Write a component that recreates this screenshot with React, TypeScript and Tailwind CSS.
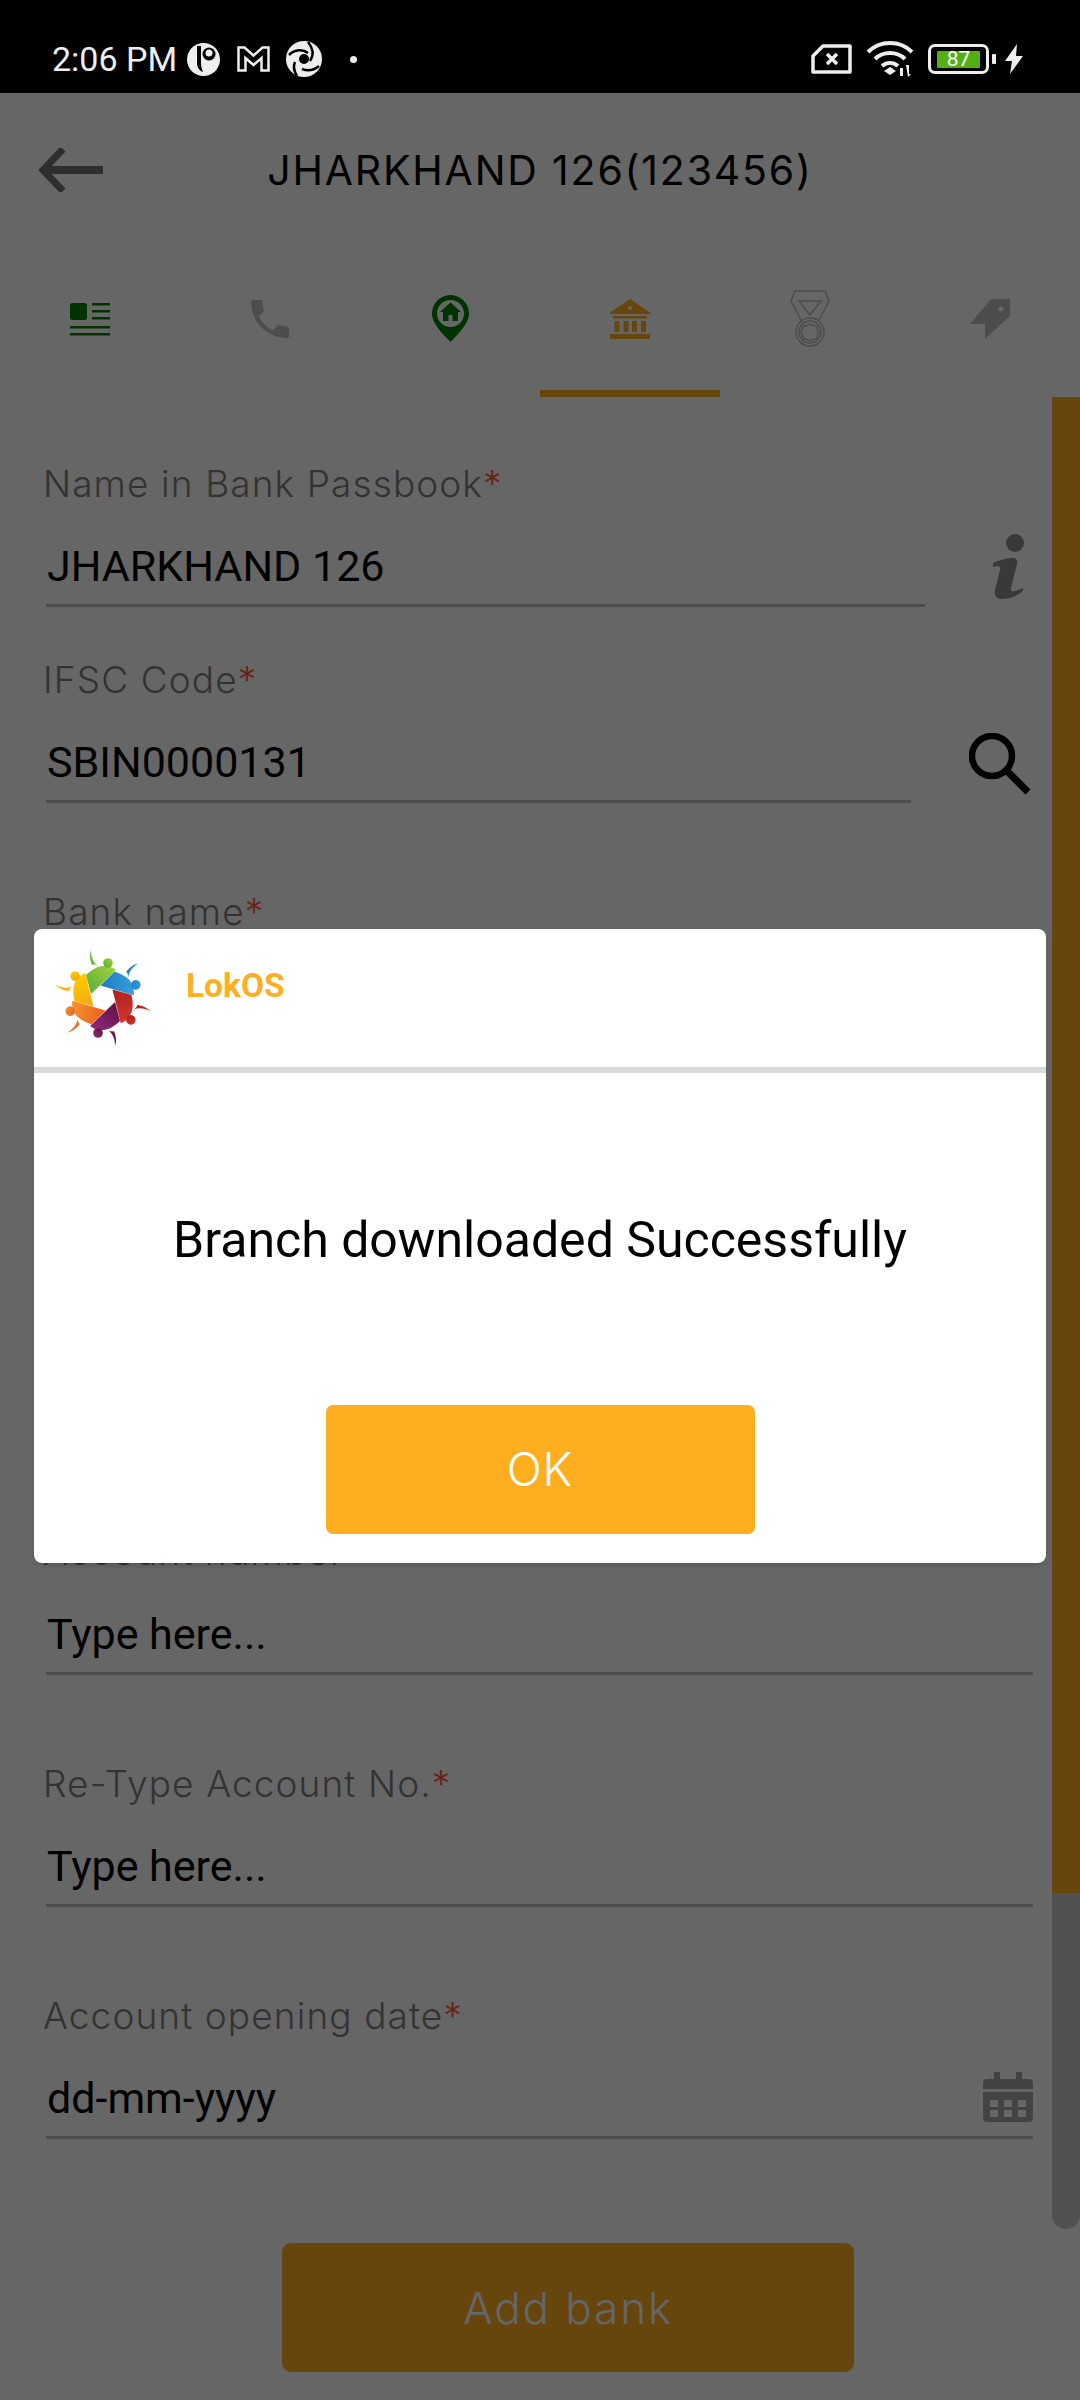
import React from 'react';

const ORANGE = '#ffae1f';

const StatusBar = () => (
  <div className="flex h-[93px] items-center bg-black pl-[52px] pr-[57px] pt-[28px] pb-[3px] text-[#eeeeee]">
    <span className="font-[Roboto,sans-serif] text-[34px] leading-none whitespace-nowrap">2:06 PM</span>
    <svg className="ml-[10px]" width="33" height="33" viewBox="0 0 33 33">
      <circle cx="16.5" cy="16.5" r="16.5" fill="#eeeeee" />
      <path d="M10 3v17c0 5 3 8 6 9-1-3-2-5-2-9V3z" fill="#000" />
      <circle cx="22" cy="11" r="6.5" fill="#000" />
      <circle cx="22" cy="10" r="3.5" fill="#eeeeee" />
    </svg>
    <svg className="ml-[17px]" width="33" height="26" viewBox="0 0 33 26">
      <path d="M1.5 1.5h6l9 8 9-8h6v23h-7V12l-8 7-8-7v12.500h-7z" fill="none" stroke="#eeeeee" strokeWidth="2.500" />
    </svg>
    <svg className="ml-[16px]" width="36" height="36" viewBox="0 0 36 36">
      <circle cx="18" cy="18" r="18" fill="#eeeeee" />
      <circle cx="18" cy="18" r="5" fill="#000" />
      <path d="M3 14c6-6 14-6 19-2M22 1c5 6 6 13 2 19M33 25c-6 5-12 5-17 3M11 35c-3-5-4-10-2-14" fill="none" stroke="#000" strokeWidth="2.500" />
    </svg>
    <span className="ml-[28px] size-[7px] rounded-full bg-[#eeeeee]" />
    <div className="ml-auto flex items-center">
      <svg width="41" height="30" viewBox="0 0 41 30">
        <path d="M12 2h27v26H2V12z" fill="none" stroke="#eeeeee" strokeWidth="3.500" strokeLinejoin="round" />
        <path d="M16 10l10 10M26 10L16 20" stroke="#eeeeee" strokeWidth="3.500" />
      </svg>
      <svg className="ml-[14px]" width="48" height="36" viewBox="0 0 48 36">
        <path d="M2 11c12-12 32-12 44 0" fill="none" stroke="#eeeeee" strokeWidth="4" />
        <path d="M9 18c8-8 22-8 30 0" fill="none" stroke="#eeeeee" strokeWidth="4" />
        <path d="M16 25c5-4 11-4 16 0" fill="none" stroke="#eeeeee" strokeWidth="4" />
        <path d="M18 30l6-4 6 4-6 4z" fill="#eeeeee" />
        <path d="M34 27h3v8h-3zM40 24h3v9h2l-3 3z" fill="#eeeeee" />
      </svg>
      <div className="ml-[14px] flex h-[30px] w-[61px] items-center justify-center rounded-[7px] border-[3px] border-[#eeeeee]">
        <span className="flex h-[17px] w-[43px] items-center justify-center rounded-[1px] bg-[#52b012] font-[Roboto,sans-serif] text-[21px] leading-none text-white">87</span>
      </div>
      <span className="ml-[3px] h-[10px] w-[4px] rounded-[1px] bg-[#eeeeee]" />
      <svg className="ml-[9px]" width="18" height="30" viewBox="0 0 18 30">
        <path d="M12 0L0 17h7L5 30l13-18h-7z" fill="#eeeeee" />
      </svg>
    </div>
  </div>
);

const Header = () => (
  <div className="relative flex h-[155px] items-center justify-center">
    <svg className="absolute left-[39px] top-[55px]" width="64" height="44" viewBox="0 0 64 44">
      <path d="M64 22H8" stroke="#737373" strokeWidth="8" />
      <path d="M24 1L4 22l20 21" fill="none" stroke="#737373" strokeWidth="7" />
    </svg>
    <h1 className="font-['Inter',sans-serif] text-[41px] leading-none tracking-[1.800px] text-black whitespace-nowrap">JHARKHAND 126(123456)</h1>
  </div>
);

const Tabs = () => (
  <div className="grid h-[149px] grid-cols-6">
    <div className="flex items-center justify-center border-b-[7px] border-transparent">
      <svg width="40" height="33" viewBox="0 0 40 33" fill="#008000">
        <rect x="0" y="0" width="17" height="17" rx="2.500" />
        <rect x="22" y="0" width="18" height="2.500" />
        <rect x="22" y="7" width="18" height="2.500" />
        <rect x="22" y="14" width="18" height="2.500" />
        <rect x="0" y="23" width="40" height="2.500" />
        <rect x="0" y="30" width="40" height="2.500" />
      </svg>
    </div>
    <div className="flex items-center justify-center border-b-[7px] border-transparent">
      <svg width="38" height="38" viewBox="3 3 18 18" fill="#c0c0c0">
        <path d="M6.620 10.790c1.440 2.830 3.760 5.140 6.590 6.590l2.200-2.200c.27-.27.67-.36 1.020-.24 1.120.37 2.330.57 3.570.57.55 0 1 .45 1 1V20c0 .55-.45 1-1 1-9.390 0-17-7.610-17-17 0-.55.45-1 1-1h3.500c.55 0 1 .45 1 1 0 1.250.2 2.450.57 3.570.11.35.03.74-.25 1.020l-2.200 2.200z" />
      </svg>
    </div>
    <div className="flex items-center justify-center border-b-[7px] border-transparent">
      <svg className="mb-[2px]" width="37" height="47" viewBox="0 0 37 47">
        <path d="M18.500 0C8.300 0 0 8.300 0 18.500 0 29 12 40 18.500 47 25 40 37 29 37 18.500 37 8.300 28.700 0 18.500 0z" fill="#008000" />
        <circle cx="18.500" cy="18.500" r="13.500" fill="#ffffff" />
        <path d="M18.500 7.500L8 17h3v9h5.500v-6h4v6H26v-9h3z" fill="#008000" />
      </svg>
    </div>
    <div className="flex items-center justify-center border-b-[7px] border-[#ffae1f]">
      <svg width="40" height="40" viewBox="0 0 40 40" fill="#ffae1f">
        <path d="M20 0L40 13.500V15H0v-1.500z" />
        <circle cx="20" cy="9" r="2" fill="#ffffff" />
        <rect x="3" y="17" width="34" height="2.500" />
        <rect x="4.500" y="22" width="5" height="11" />
        <rect x="13.500" y="22" width="5" height="11" />
        <rect x="22" y="22" width="5" height="11" />
        <rect x="31" y="22" width="5" height="11" />
        <rect x="0" y="35" width="40" height="5" />
      </svg>
    </div>
    <div className="flex items-center justify-center border-b-[7px] border-transparent">
      <svg className="mb-[2px]" width="40" height="57" viewBox="0 0 40 57" fill="none" stroke="#c0c0c0" strokeWidth="1.500">
        <path d="M5 1h30l4 10-11 21M5 1L1 11l11 21M9 11h22L20 25z" />
        <circle cx="20" cy="42" r="14" />
        <circle cx="20" cy="42" r="11" />
        <path d="M20 34l3 1.500 3.500.500 1 3.500 1.500 3-1.500 3-1 3.500-3.500.500-3 1.500-3-1.500-3.500-.500-1-3.500-1.500-3 1.500-3 1-3.500 3.500-.500z" />
      </svg>
    </div>
    <div className="flex items-center justify-center border-b-[7px] border-transparent">
      <svg width="40" height="40" viewBox="0 0 40 40">
        <path d="M21 0h19v17L15 40V25H0z" fill="#c0c0c0" />
        <circle cx="31" cy="10" r="2.500" fill="#ffffff" />
      </svg>
    </div>
  </div>
);

const Field = ({
  label,
  value,
  width,
  children,
}: {
  label: string;
  value: string;
  width: string;
  children?: React.ReactNode;
}) => (
  <div className={width}>
    <div className="-ml-[3px] h-[44px] font-['Inter',sans-serif] text-[37px] font-light leading-[42px] tracking-[1.100px] text-[#808080] whitespace-nowrap">
      {label}
      <span className="text-[#ff5a3c]">*</span>
    </div>
    <div className="mt-[20px] flex h-[80px] items-center justify-between border-b-[3px] border-[#c0c0c0] pl-[1px] pt-[1px] font-[Roboto,sans-serif] text-[43px] text-black">
      <span>{value}</span>
      {children}
    </div>
  </div>
);

const CalendarIcon = () => (
  <svg className="-mt-[3px]" width="50" height="50" viewBox="0 0 50 50" fill="#a8a8a8">
    <path d="M11 0h6v7h16V0h6v7h7a4 4 0 0 1 4 4v6H0v-6a4 4 0 0 1 4-4h7z" />
    <path fillRule="evenodd" d="M0 20h50v26a4 4 0 0 1-4 4H4a4 4 0 0 1-4-4zM7 28v7h8v-7zM21 28v7h8v-7zM35 28v7h8v-7zM7 38v7h8v-7zM21 38v7h8v-7zM35 38v7h8v-7z" />
  </svg>
);

const Form = () => (
  <div className="flex flex-1 flex-col pl-[46px] pt-[66px]">
    <div className="flex items-end">
      <Field label="Name in Bank Passbook" value="JHARKHAND 126" width="w-[879px]" />
      <svg className="mb-[3px] ml-[67px]" width="32" height="70" viewBox="0 0 32 70" fill="#948c8c">
        <circle cx="23" cy="9" r="9" />
        <path d="M1 29c6-3 13-5 20-5 3 0 5 2 4 6l-6 24c-1 3 1 4 4 3l8-3v3c-6 5-13 8-20 8-6 0-9-3-8-9l5-20c1-3-1-4-3-4l-4 1z" />
      </svg>
    </div>
    <div className="mt-[52px] flex items-end">
      <Field label="IFSC Code" value="SBIN0000131" width="w-[865px]" />
      <svg className="mb-[8px] ml-[58px]" width="62" height="62" viewBox="0 0 62 62" fill="none" stroke="#000000">
        <circle cx="23" cy="23" r="20" strokeWidth="6.500" />
        <path d="M38 38l21 21" strokeWidth="7" />
      </svg>
    </div>
    <div className="mt-[88px]">
      <Field label="Bank name" value="" width="w-[987px]" />
    </div>
    {/* the fields between here and account number sit behind the dialog */}
    <div className="mt-[496px]">
      <Field label="Account number" value="Type here..." width="w-[987px]" />
    </div>
    <div className="mt-[88px]">
      <Field label="Re-Type Account No." value="Type here..." width="w-[987px]" />
    </div>
    <div className="mt-[88px]">
      <Field label="Account opening date" value="dd-mm-yyyy" width="w-[987px]">
        <CalendarIcon />
      </Field>
    </div>
    <button className="ml-[236px] mt-[104px] flex h-[129px] w-[572px] items-center justify-center rounded-[9px] bg-[#ffae1f] font-['Inter',sans-serif] text-[44px] font-light tracking-[1.900px] text-white">
      Add bank
    </button>
  </div>
);

const petals = [
  { id: 'green', from: '#4fae3c', to: '#a6d13a', angle: 0 },
  { id: 'blue', from: '#1f78c1', to: '#35a5de', angle: 60 },
  { id: 'red', from: '#a51f1f', to: '#d9372a', angle: 120 },
  { id: 'purple', from: '#5c0f3c', to: '#962a80', angle: 180 },
  { id: 'orange', from: '#ea5a22', to: '#f59a2e', angle: 240 },
  { id: 'yellow', from: '#f7a512', to: '#fdd000', angle: 300 },
];

const Logo = () => (
  <svg width="100" height="100" viewBox="-50 -50 100 100">
    <defs>
      {petals.map((p) => (
        <linearGradient key={p.id} id={p.id} x1="0" y1="1" x2="1" y2="0">
          <stop offset="0" stopColor={p.from} />
          <stop offset="1" stopColor={p.to} />
        </linearGradient>
      ))}
    </defs>
    {petals.map((p) => (
      <g key={p.id} transform={`rotate(${p.angle})`}>
        <path d="M-12-4L-17-23C-12-28-5-32 0-32c5 0 9 1 13 4z" fill={`url(#${p.id})`} />
        <circle cx="5" cy="-35" r="4.800" fill={`url(#${p.id})`} />
        <path d="M-12-48c0 7 2 12 7 16-1-1-5-2-6-1-2-5-3-10-1-15z" fill={`url(#${p.id})`} />
      </g>
    ))}
  </svg>
);

const SuccessDialog = () => (
  <div className="absolute inset-x-0 bottom-0 top-[92px] flex items-center justify-center bg-black/60">
    <div className="flex h-[634px] w-[1012px] flex-col rounded-[8px] bg-white shadow-md">
      <div className="flex h-[138px] items-center pl-[19px]">
        <Logo />
        <span className="mb-[24px] ml-[33px] font-[Roboto,sans-serif] text-[33.500px] font-bold text-[#ffae1f]">LokOS</span>
      </div>
      <div className="h-[6px] bg-[#d9d9d9]" />
      <div className="flex flex-1 items-center justify-center pt-[3px] font-[Roboto,sans-serif] text-[50px] text-black">
        Branch downloaded Successfully
      </div>
      <button className="mb-[29px] flex h-[129px] w-[429px] items-center justify-center self-center rounded-[7px] bg-[#ffae1f] font-['Inter',sans-serif] text-[46px] font-light tracking-[1px] text-white">
        OK
      </button>
    </div>
  </div>
);

export default function App() {
  return (
    <div className="relative h-[2400px] w-[1080px] overflow-hidden bg-white">
      <StatusBar />
      <Header />
      <Tabs />
      <div className="flex">
        <Form />
        <div className="flex h-[1832px] w-[28px] flex-col overflow-hidden rounded-b-[14px] bg-[#c8cbc8]">
          <div className="h-[1496px]" style={{ backgroundColor: ORANGE }} />
        </div>
      </div>
      <SuccessDialog />
    </div>
  );
}
